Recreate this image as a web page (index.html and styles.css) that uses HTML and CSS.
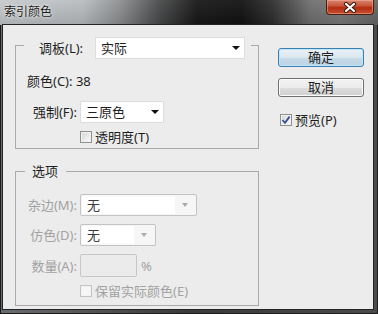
FILE: index.html
```html
<!DOCTYPE html>
<html lang="zh-CN">
<head>
    <meta charset="UTF-8">
    <title>索引颜色</title>
    <link rel="stylesheet" href="styles.css">
</head>
<body>
    <div class="window">
        <div class="titlebar">
            <span class="title">索引颜色</span>
            <div class="close-btn">
                <svg width="14" height="11" viewBox="0 0 14 11">
                    <path d="M3 2 L11 9 M11 2 L3 9" stroke="#3a1a12" stroke-width="4.2" stroke-linecap="round"/>
                    <path d="M3 2 L11 9 M11 2 L3 9" stroke="#ffffff" stroke-width="2.2" stroke-linecap="round"/>
                </svg>
            </div>
        </div>

        <div class="client">
            <div class="left-col">
                <!-- 调板 group -->
                <div class="group group-main">
                    <div class="group-head head-main">
                        <span class="head-label">调板(L):</span>
                        <div class="select select-palette">
                            <span class="value">实际</span>
                            <i class="arrow"></i>
                        </div>
                    </div>
                    <div class="colors-line">颜色(C): 38</div>
                    <div class="form-grid grid-force">
                        <span class="label">强制(F):</span>
                        <div class="select select-force">
                            <span class="value">三原色</span>
                            <i class="arrow"></i>
                        </div>
                    </div>
                    <div class="check-row check-indent">
                        <span class="checkbox"></span>
                        <span>透明度(T)</span>
                    </div>
                </div>

                <!-- 选项 group -->
                <div class="group group-options">
                    <div class="group-head head-options">选项</div>
                    <div class="form-grid grid-options">
                        <span class="label off">杂边(M):</span>
                        <div class="select-off select-matte">
                            <span class="field">无</span>
                            <span class="drop"><i class="arrow arrow-off"></i></span>
                        </div>

                        <span class="label off">仿色(D):</span>
                        <div class="select-off select-dither">
                            <span class="field">无</span>
                            <span class="drop"><i class="arrow arrow-off"></i></span>
                        </div>

                        <span class="label off">数量(A):</span>
                        <div class="amount">
                            <span class="input-off"></span>
                            <span class="off">%</span>
                        </div>
                    </div>
                    <div class="check-row check-indent off">
                        <span class="checkbox checkbox-off"></span>
                        <span>保留实际颜色(E)</span>
                    </div>
                </div>
            </div>

            <div class="right-col">
                <button class="btn btn-default">确定</button>
                <button class="btn btn-cancel">取消</button>
                <div class="check-row preview">
                    <span class="checkbox">
                        <svg width="10" height="10" viewBox="0 0 10 10">
                            <path d="M1.5 5 L4 7.8 L8.6 1.6" fill="none" stroke="#3b4f96" stroke-width="1.8"/>
                        </svg>
                    </span>
                    <span>预览(P)</span>
                </div>
            </div>
        </div>
    </div>
</body>
</html>
```

FILE: styles.css
```css
* {
    box-sizing: border-box;
}
body {
    margin: 0;
    font-family: "Noto Sans", "Noto Sans CJK SC", sans-serif;
    font-size: 13px;
    line-height: 16px;
    color: #1e1e1e;
}
.window {
    width: 378px;
    height: 314px;
    display: flex;
    flex-direction: column;
    padding: 0 5px 5px 3px;
    background: linear-gradient(90deg, #6a6d70 0%, #3a3a3a 50%, #4c4c4c 100%);
    box-shadow: inset 0 0 0 1px #1b1b1b;
}
.titlebar {
    height: 25px;
    margin: 0 -5px 0 -3px;
    display: flex;
    align-items: flex-start;
    background:
        linear-gradient(rgba(255, 255, 255, 0.06), rgba(0, 0, 0, 0.12)),
        linear-gradient(90deg, #c6cacd 0%, #b9bdc0 22%, #8c8e90 32%, #4a4b4c 42%, #181818 52%, #121212 64%, #2e2e2e 72%, #6f6f6f 82%, #7a7a7a 90%, #666 100%);
}
.title {
    padding: 3px 0 0 4px;
    font-family: "Noto Sans CJK SC", sans-serif;
    font-size: 12px;
    color: #1a1a1a;
    text-shadow: 0 0 4px #e8e8e8, 0 0 2px #ffffff;
}
.close-btn {
    margin-left: auto;
    margin-right: 4px;
    width: 48px;
    height: 15px;
    display: flex;
    align-items: center;
    justify-content: center;
    border: 1px solid #4a1c12;
    border-top: none;
    border-radius: 0 0 4px 4px;
    background: linear-gradient(#d88670 0%, #c9573b 40%, #b22d12 55%, #c8502e 100%);
    box-shadow: inset 0 0 0 1px rgba(255, 190, 170, 0.45);
}

/* client area */
.client {
    flex: 1;
    display: flex;
    gap: 19px;
    padding: 20px 0 0 12px;
    background: #ececec;
    box-shadow: 0 0 0 1px #242424;
}
.left-col {
    width: 244px;
}
.group {
    border: 1px solid #aaaaaa;
}
.group-head {
    background: #ececec;
}
.head-main {
    display: flex;
    align-items: center;
    height: 22px;
    margin: -9px 7px 0 8px;
    padding: 0 6px 0 15px;
}
.head-label {
    flex: 1;
}
.group-main {
    padding-bottom: 3px;
}
.colors-line {
    margin: 14px 0 0 11px;
}
.group-options {
    margin-top: 22px;
    padding-bottom: 6px;
}
.head-options {
    display: inline-block;
    margin: -9px 0 0 9px;
    padding: 0 8px 0 7px;
    vertical-align: top;
}

/* label + control grids */
.form-grid {
    display: grid;
    grid-template-columns: 61px auto;
    column-gap: 3px;
    row-gap: 8px;
    align-items: center;
    justify-items: start;
}
.form-grid .label {
    justify-self: end;
}
.grid-force {
    margin-top: 12px;
}
.grid-options {
    margin-top: 6px;
}
.off {
    color: #a2a2a2;
}

/* dropdowns */
.select {
    display: flex;
    align-items: center;
    height: 22px;
    padding: 0 4px 0 5px;
    background: #ffffff;
    border: 1px solid #dcdcdc;
}
.select .value {
    flex: 1;
}
.select-palette {
    width: 150px;
}
.select-force {
    width: 84px;
}
.arrow {
    display: block;
    width: 0;
    height: 0;
    border-left: 4px solid transparent;
    border-right: 4px solid transparent;
    border-top: 4px solid #111111;
}
.arrow-off {
    border-left-width: 3.5px;
    border-right-width: 3.5px;
    border-top-color: #a9a9a9;
}
.select-off {
    display: flex;
    height: 22px;
    padding: 1px;
    border: 1px solid #c3c3c3;
    border-radius: 2px;
    background: #f6f6f6;
}
.select-off .field {
    flex: 1;
    padding-left: 5px;
    line-height: 18px;
    color: #3a3a3a;
    background: #ffffff;
}
.select-off .drop {
    width: 20px;
    display: flex;
    align-items: center;
    justify-content: center;
}
.select-matte {
    width: 117px;
}
.select-dither {
    width: 76px;
}
.amount {
    display: flex;
    align-items: center;
    gap: 4px;
}
.input-off {
    width: 57px;
    height: 23px;
    border: 1px solid #c6c6c6;
    border-radius: 2px;
    background: #ebebeb;
}

/* checkboxes */
.check-row {
    display: flex;
    align-items: center;
    gap: 3px;
    height: 16px;
}
.check-indent {
    margin: 6px 0 0 64px;
}
.checkbox {
    width: 12px;
    height: 12px;
    display: flex;
    align-items: center;
    justify-content: center;
    border: 1px solid #8e8f8f;
    background: linear-gradient(135deg, #d6d6d6, #fbfbfb);
    box-shadow: inset 0 0 0 1px #f2f2f2;
}
.checkbox-off {
    border-color: #c4c4c4;
    background: #f6f6f6;
}

/* right column */
.right-col {
    width: 86px;
    padding-top: 3px;
}
.btn {
    display: block;
    width: 86px;
    height: 19px;
    padding: 0;
    font: inherit;
    line-height: 17px;
    color: #1e1e1e;
    border: 1px solid #707070;
    border-radius: 3px;
    background: linear-gradient(#f2f2f2 0%, #ebebeb 50%, #dddddd 51%, #cfcfcf 100%);
    box-shadow: inset 0 0 0 1px #fbfbfb;
}
.btn-default {
    border-color: #3c7fb1;
    background: linear-gradient(#e9f1f7 0%, #dbe7f0 50%, #c8dae8 51%, #bcd2e3 100%);
    box-shadow: inset 0 0 0 1px #bfe7fb;
}
.btn-cancel {
    margin-top: 11px;
}
.preview {
    margin: 15px 0 0 2px;
}
```
